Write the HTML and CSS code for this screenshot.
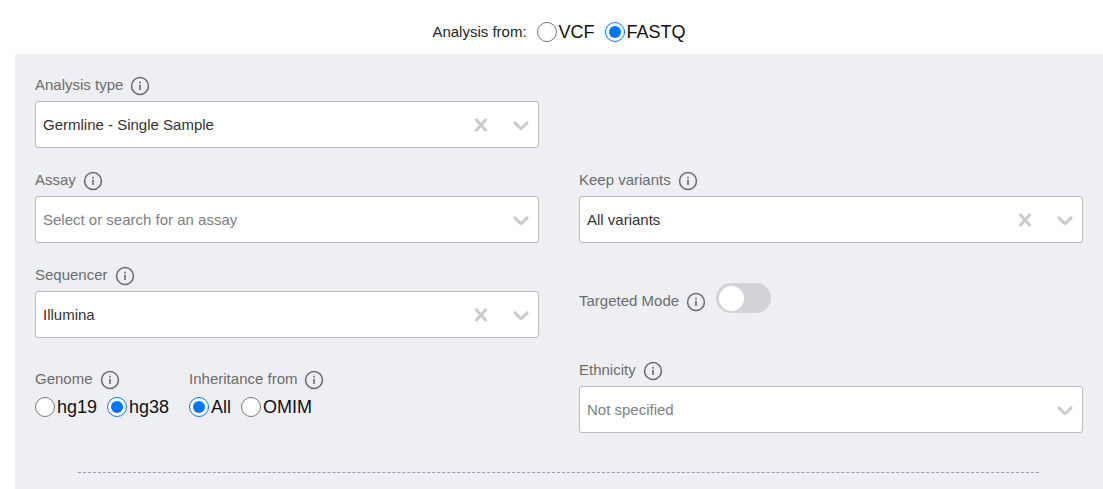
FILE: index.html
```html
<!DOCTYPE html>
<html lang="en">
<head>
    <meta charset="UTF-8">
    <meta name="viewport" content="width=device-width, initial-scale=1.0">
    <title>New analysis</title>
    <link rel="stylesheet" href="styles.css">
</head>
<body>
    <svg class="sprite" aria-hidden="true">
        <symbol id="info" viewBox="0 0 24 24">
            <circle cx="12" cy="12" r="9.2" fill="none" stroke="currentColor" stroke-width="1.7"/>
            <path d="M11.100 7.400h1.800v1.800h-1.800zM11.100 10.600h1.800v5.800h-1.800z"/>
        </symbol>
        <symbol id="cross" viewBox="0 0 20 20">
            <path d="M14.348 14.849c-0.469 0.469-1.229 0.469-1.697 0l-2.651-3.030-2.651 3.029c-0.469 0.469-1.229 0.469-1.697 0-0.469-0.469-0.469-1.229 0-1.697l2.758-3.150-2.759-3.152c-0.469-0.469-0.469-1.228 0-1.697s1.228-0.469 1.697 0l2.652 3.031 2.651-3.031c0.469-0.469 1.228-0.469 1.697 0s0.469 1.229 0 1.697l-2.758 3.152 2.758 3.150c0.469 0.469 0.469 1.229 0 1.698z"/>
        </symbol>
        <symbol id="chevron" viewBox="0 0 20 20">
            <path d="M4.516 7.548c0.436-0.446 1.043-0.481 1.576 0l3.908 3.747 3.908-3.747c0.533-0.481 1.141-0.446 1.574 0 0.436 0.445 0.408 1.197 0 1.615-0.406 0.418-4.695 4.502-4.695 4.502-0.217 0.223-0.502 0.335-0.787 0.335s-0.570-0.112-0.789-0.335c0 0-4.287-4.084-4.695-4.502s-0.436-1.170 0-1.615z"/>
        </symbol>
    </svg>

    <form class="analysis-form">
        <div class="source" role="radiogroup" aria-labelledby="source-label">
            <span id="source-label">Analysis from:</span>
            <div class="radios">
                <label><input type="radio" name="source" value="vcf">VCF</label>
                <label><input type="radio" name="source" value="fastq" checked>FASTQ</label>
            </div>
        </div>

        <div class="panel">
            <div class="fields">
                <div class="field first">
                    <div class="field-head">
                        <label for="type">Analysis type</label>
                        <svg class="info"><use href="#info"/></svg>
                    </div>
                    <div class="select">
                        <select id="type"><option>Germline - Single Sample</option></select>
                        <button type="button" class="clear" aria-label="Clear"><svg><use href="#cross"/></svg></button>
                        <svg class="arrow"><use href="#chevron"/></svg>
                    </div>
                </div>

                <div class="field">
                    <div class="field-head">
                        <label for="assay">Assay</label>
                        <svg class="info"><use href="#info"/></svg>
                    </div>
                    <div class="select">
                        <select id="assay" class="empty"><option value="">Select or search for an assay</option></select>
                        <svg class="arrow"><use href="#chevron"/></svg>
                    </div>
                </div>

                <div class="field">
                    <div class="field-head">
                        <label for="variants">Keep variants</label>
                        <svg class="info"><use href="#info"/></svg>
                    </div>
                    <div class="select">
                        <select id="variants"><option>All variants</option></select>
                        <button type="button" class="clear" aria-label="Clear"><svg><use href="#cross"/></svg></button>
                        <svg class="arrow"><use href="#chevron"/></svg>
                    </div>
                </div>

                <div class="field">
                    <div class="field-head">
                        <label for="sequencer">Sequencer</label>
                        <svg class="info"><use href="#info"/></svg>
                    </div>
                    <div class="select">
                        <select id="sequencer"><option>Illumina</option></select>
                        <button type="button" class="clear" aria-label="Clear"><svg><use href="#cross"/></svg></button>
                        <svg class="arrow"><use href="#chevron"/></svg>
                    </div>
                </div>

                <div class="field targeted">
                    <div class="field-head">
                        <label for="targeted">Targeted Mode</label>
                        <svg class="info"><use href="#info"/></svg>
                    </div>
                    <input type="checkbox" id="targeted" class="switch">
                </div>

                <div class="field groups">
                    <div role="radiogroup" aria-labelledby="genome-label">
                        <div class="field-head">
                            <span id="genome-label">Genome</span>
                            <svg class="info"><use href="#info"/></svg>
                        </div>
                        <div class="radios">
                            <label><input type="radio" name="genome" value="hg19">hg19</label>
                            <label><input type="radio" name="genome" value="hg38" checked>hg38</label>
                        </div>
                    </div>
                    <div role="radiogroup" aria-labelledby="inheritance-label">
                        <div class="field-head">
                            <span id="inheritance-label">Inheritance from</span>
                            <svg class="info"><use href="#info"/></svg>
                        </div>
                        <div class="radios">
                            <label><input type="radio" name="inheritance" value="all" checked>All</label>
                            <label><input type="radio" name="inheritance" value="omim">OMIM</label>
                        </div>
                    </div>
                </div>

                <div class="field">
                    <div class="field-head">
                        <label for="ethnicity">Ethnicity</label>
                        <svg class="info"><use href="#info"/></svg>
                    </div>
                    <div class="select">
                        <select id="ethnicity" class="empty"><option value="">Not specified</option></select>
                        <svg class="arrow"><use href="#chevron"/></svg>
                    </div>
                </div>
            </div>
            <hr>
        </div>
    </form>
</body>
</html>
```
FILE: styles.css
```css
*{box-sizing:border-box;}
body{margin:0;background:#fff;color:#212529;font-family:"Liberation Sans", Arial, sans-serif;font-size:15px;line-height:22px;}
.sprite{display:none;}
.analysis-form{padding-left:15px;}

.source{display:flex;justify-content:center;align-items:center;gap:10px;padding:20px 0 10px;}
.radios{display:flex;gap:10px;color:#111;font-size:18px;line-height:24px;}
.radios label{display:flex;align-items:center;gap:2px;}
.radios input{width:20px;height:20px;margin:0;accent-color:#0075ff;}

.panel{padding:20px 20px 16px;background:#eeeff5;}
.fields{display:grid;grid-template-columns:1fr 1fr;gap:21px 40px;}
.first{grid-column:1 / 2;}
.first + .field{grid-column:1;}
.field-head{display:flex;align-items:flex-start;gap:6px;height:23px;margin-bottom:4px;color:#6c6c6c;}
.info{width:22px;height:22px;align-self:flex-end;fill:currentColor;}

.select{position:relative;}
.select select{display:block;width:100%;height:47px;padding:0 90px 0 7px;border:1px solid #bbb;border-radius:3px;background:#fff;color:#333;font:inherit;appearance:none;}
.select select.empty{color:#808080;}
.select svg{display:block;width:26px;height:26px;fill:#ccc;}
.select .arrow{position:absolute;top:11px;right:5px;pointer-events:none;}
.clear{position:absolute;top:11px;right:45px;padding:0;border:0;background:none;cursor:pointer;}

.targeted{display:flex;align-items:flex-end;align-self:start;gap:9px;padding-top:19px;}
.targeted .field-head{margin-bottom:0;}
.switch{width:55px;height:30px;margin:0;padding:3px;border-radius:15px;background:#d2d2d7;appearance:none;cursor:pointer;}
.switch::before{content:"";display:block;width:25px;height:25px;border-radius:50%;background:#fff;}
.switch:checked{background:#0075ff;}
.switch:checked::before{margin-left:auto;}

.groups{display:flex;gap:20px;padding-top:9px;}

hr{margin:39px 44px 0 43px;border:0;border-top:1px dashed #9c9ca4;}
```
